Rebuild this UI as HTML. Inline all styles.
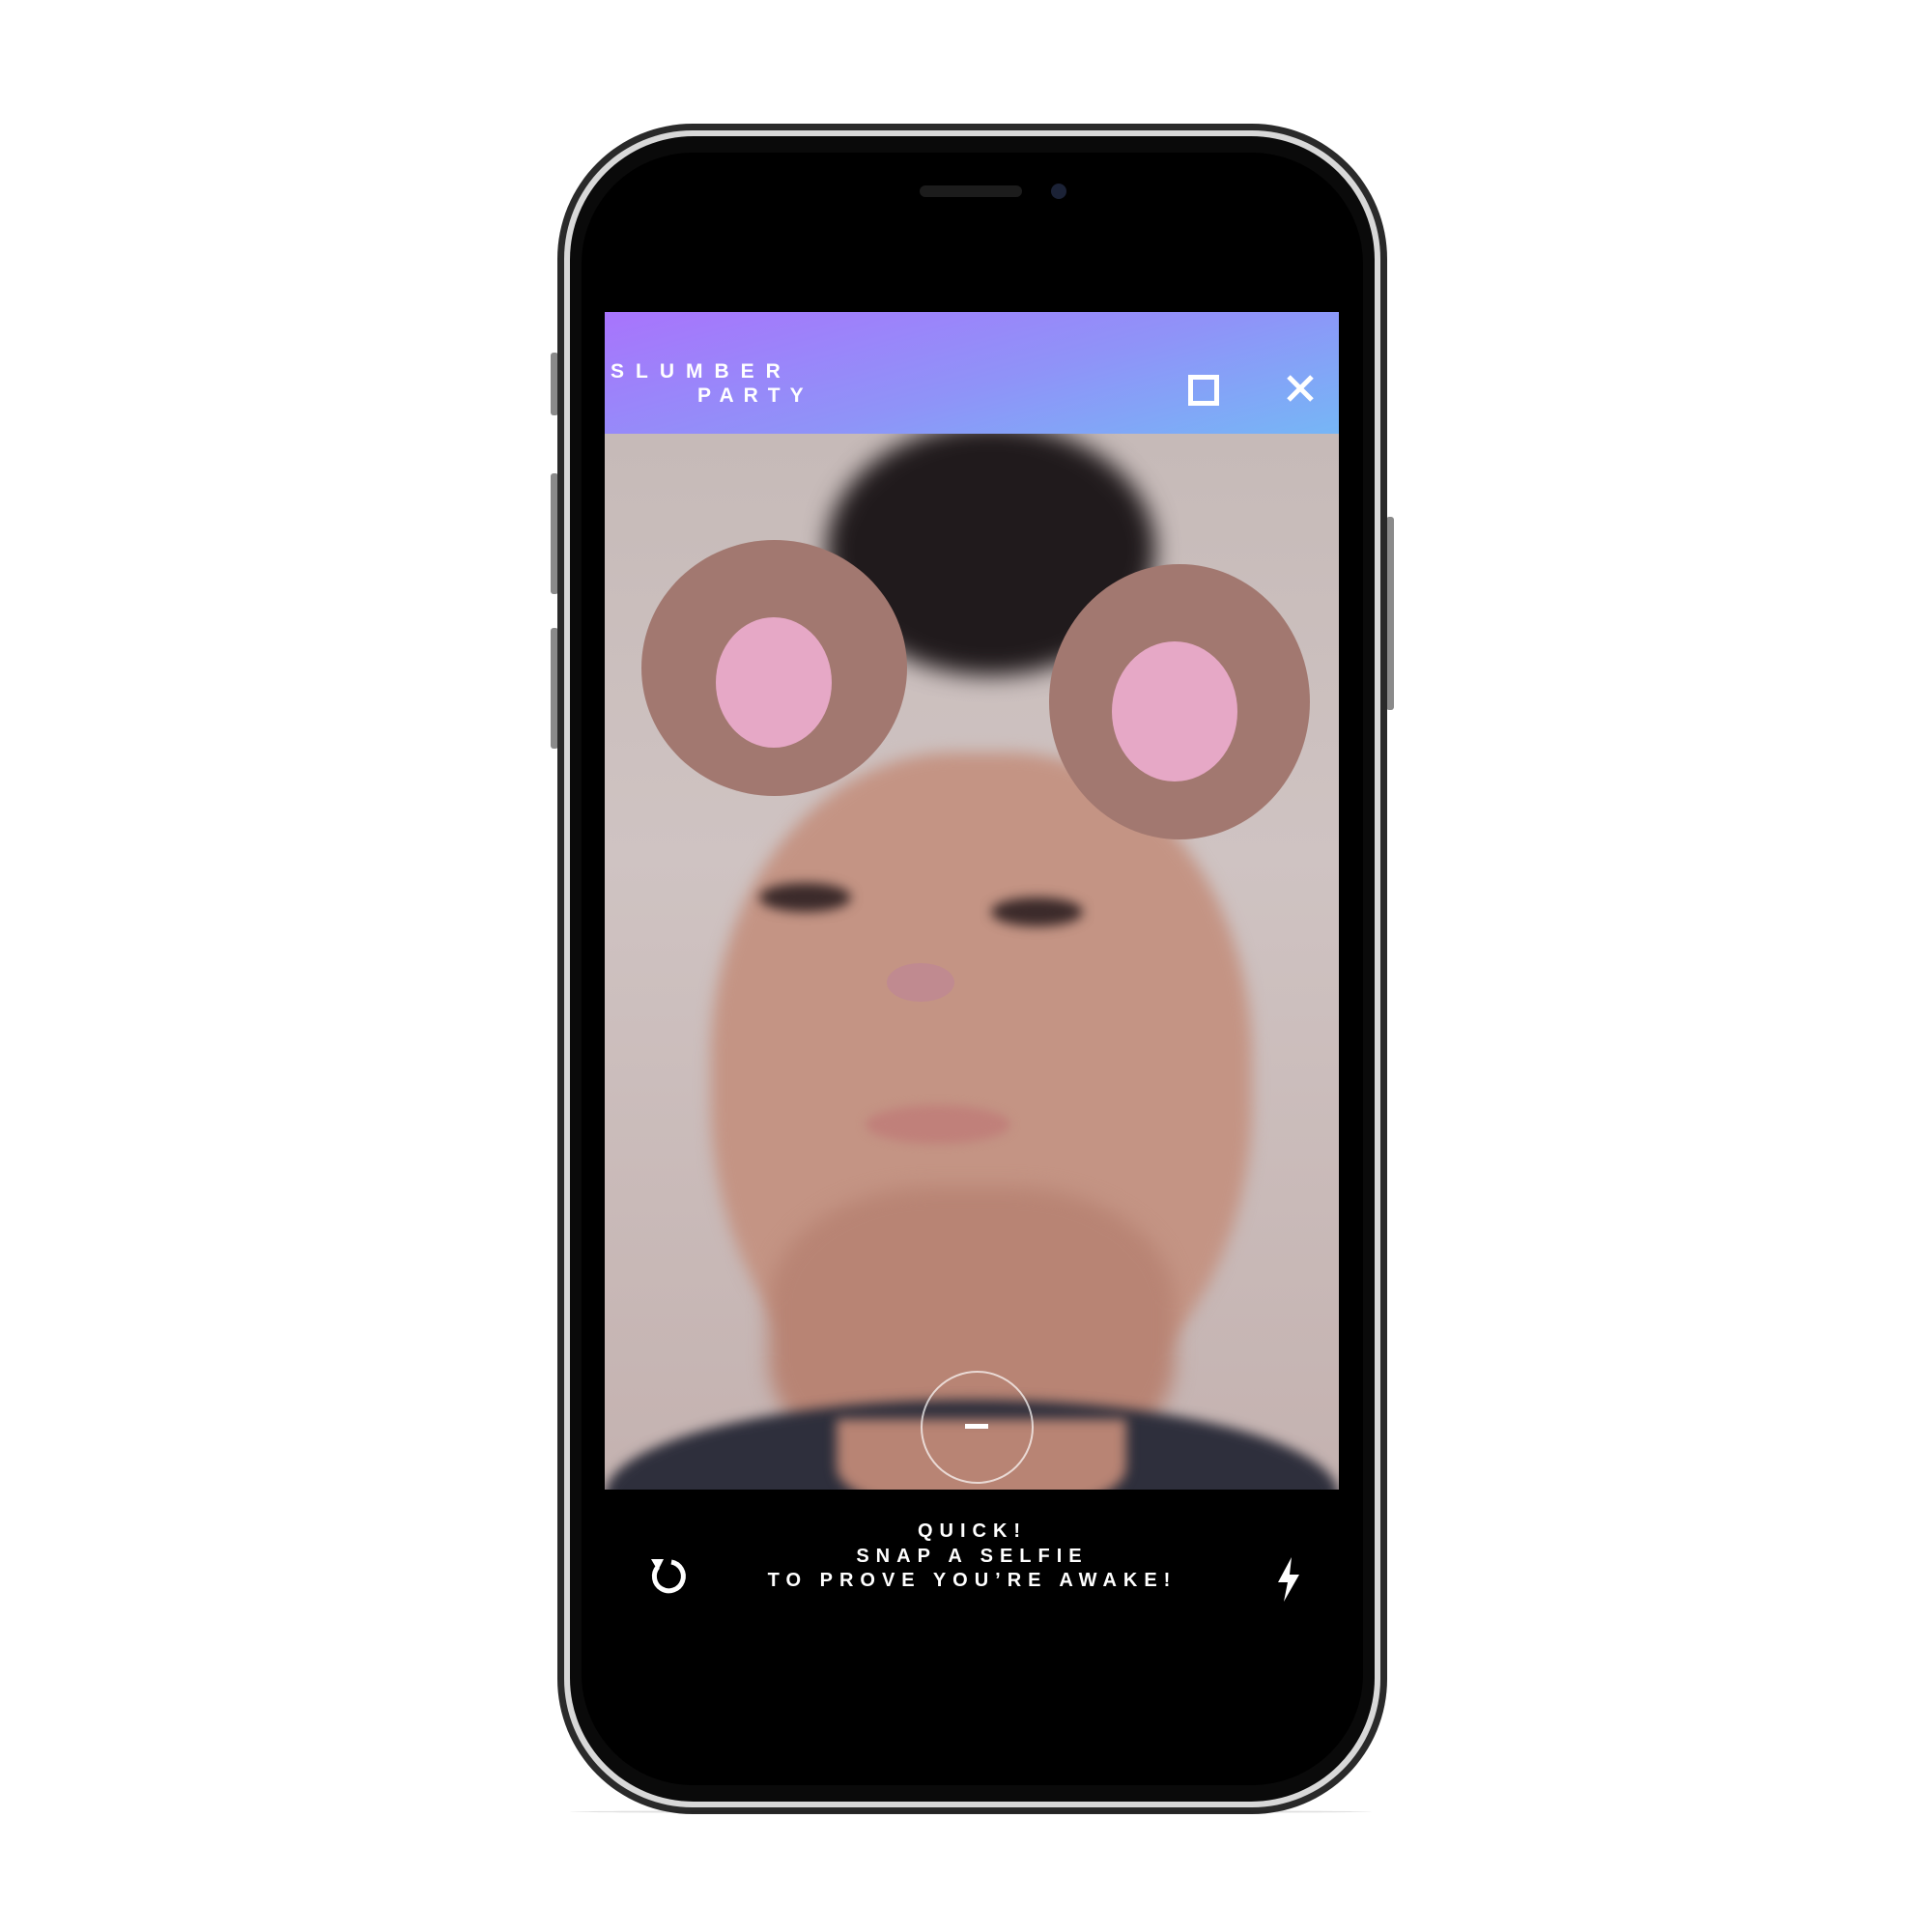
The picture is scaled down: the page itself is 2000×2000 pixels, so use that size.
<!DOCTYPE html>
<html><head><meta charset="utf-8">
<style>
html,body{margin:0;padding:0;background:#fff;width:2000px;height:2000px;overflow:hidden}
.abs{position:absolute}
.frame{left:577px;top:128px;width:859px;height:1750px;border-radius:140px;
 background:linear-gradient(90deg,#555,#eee 1.5%,#888 3%,#ddd 4%,#333 5%);}
.frame2{left:584px;top:135px;width:845px;height:1736px;border-radius:133px;background:#d8d8d8;}
.frame3{left:590px;top:141px;width:833px;height:1724px;border-radius:128px;background:#0a0a0a;}
.screen{left:602px;top:158px;width:809px;height:1690px;border-radius:115px;background:#000;overflow:hidden}
.btn{background:#8a8a8a;border-radius:3px}
.t{font-family:"Liberation Sans",sans-serif;font-weight:bold;color:#fff;white-space:nowrap}
</style></head><body>
<div class="abs btn" style="left:570px;top:365px;width:8px;height:65px"></div>
<div class="abs btn" style="left:570px;top:490px;width:8px;height:125px"></div>
<div class="abs btn" style="left:570px;top:650px;width:8px;height:125px"></div>
<div class="abs btn" style="left:1435px;top:535px;width:8px;height:200px"></div>
<div class="abs frame" style="background:#2a2a2a"></div>
<div class="abs frame2"></div>
<div class="abs frame3"></div>
<div class="abs screen">
 <div class="abs" style="left:350px;top:34px;width:106px;height:12px;border-radius:6px;background:#1c1c1c"></div>
 <div class="abs" style="left:486px;top:32px;width:16px;height:16px;border-radius:50%;background:#1b2236"></div>
 <!-- header -->
 <div class="abs" style="left:24px;top:165px;width:760px;height:126px;background:linear-gradient(165deg,#a874fc 0%,#8f93f8 55%,#76b6f6 100%)"></div>
 <!-- photo -->
 <div class="abs" style="left:24px;top:291px;width:760px;height:1093px;overflow:hidden;background:linear-gradient(180deg,#c6bab8,#cfc3c2 40%,#c4b2b0 100%)">
  <div class="abs" style="left:230px;top:-10px;width:340px;height:260px;border-radius:50%;background:#201a1c;filter:blur(12px)"></div>
  <div class="abs" style="left:110px;top:330px;width:560px;height:700px;border-radius:45% 45% 48% 48%;background:#c49484;filter:blur(8px)"></div>
  <div class="abs" style="left:170px;top:780px;width:420px;height:300px;border-radius:40%;background:#b88474;filter:blur(10px)"></div>
  <div class="abs" style="left:0px;top:1000px;width:760px;height:200px;background:#2e2f3c;border-radius:50% 50% 0 0;filter:blur(6px)"></div>
  <div class="abs" style="left:240px;top:1020px;width:300px;height:100px;background:#b88474;border-radius:0 0 50% 50%;filter:blur(6px)"></div>
  <div class="abs" style="left:38px;top:110px;width:275px;height:265px;border-radius:50%;background:#a27870"></div>
  <div class="abs" style="left:115px;top:190px;width:120px;height:135px;border-radius:50%;background:#e6a8c6"></div>
  <div class="abs" style="left:460px;top:135px;width:270px;height:285px;border-radius:50%;background:#a27870"></div>
  <div class="abs" style="left:525px;top:215px;width:130px;height:145px;border-radius:50%;background:#e6a8c6"></div>
  <div class="abs" style="left:160px;top:465px;width:95px;height:30px;border-radius:50%;background:#3b2a2a;filter:blur(6px)"></div>
  <div class="abs" style="left:400px;top:480px;width:95px;height:30px;border-radius:50%;background:#3b2a2a;filter:blur(6px)"></div>
  <div class="abs" style="left:292px;top:548px;width:70px;height:40px;border-radius:50%;background:#c08a90"></div>
  <div class="abs" style="left:270px;top:695px;width:150px;height:40px;border-radius:50%;background:#c0807a;filter:blur(5px)"></div>
 </div>
 <!-- header text & icons -->
 <div class="abs t" style="left:30px;top:215px;font-size:21px;letter-spacing:12px">SLUMBER</div>
 <div class="abs t" style="left:120px;top:240px;font-size:21px;letter-spacing:10px">PARTY</div>
 <div class="abs" style="left:628px;top:230px;width:22px;height:22px;border:5px solid #fff"></div>
 <svg class="abs" style="left:729px;top:229px" width="30" height="30" viewBox="0 0 30 30"><path d="M3 3L27 27M27 3L3 27" stroke="#fff" stroke-width="5"/></svg>
 <!-- shutter -->
 <div class="abs" style="left:351px;top:1261px;width:113px;height:113px;border-radius:50%;border:2px solid rgba(255,255,255,0.7)"></div>
 <div class="abs" style="left:397px;top:1316px;width:24px;height:5px;background:#fff"></div>
 <!-- bottom text -->
 <div class="abs t" style="left:0;width:809px;top:1415px;text-align:center;font-size:20px;letter-spacing:7px;line-height:25.5px">QUICK!<br>SNAP A SELFIE<br>TO PROVE YOU’RE AWAKE!</div>
 <svg class="abs" style="left:66px;top:1450px" width="44" height="46" viewBox="0 0 44 46"><path d="M13 14A15 15 0 1 0 27 9" fill="none" stroke="#fff" stroke-width="5"/><path d="M6 6L19 6L13 18Z" fill="#fff"/></svg>
 <svg class="abs" style="left:719px;top:1454px" width="26" height="46" viewBox="0 0 26 46"><path d="M16 0L2 26L12 26L8 46L24 18L14 18Z" fill="#fff"/></svg>
</div>
<div class="abs" style="left:590px;top:1874px;width:830px;height:3px;background:rgba(0,0,0,0.12);border-radius:50%"></div>
</body></html>
